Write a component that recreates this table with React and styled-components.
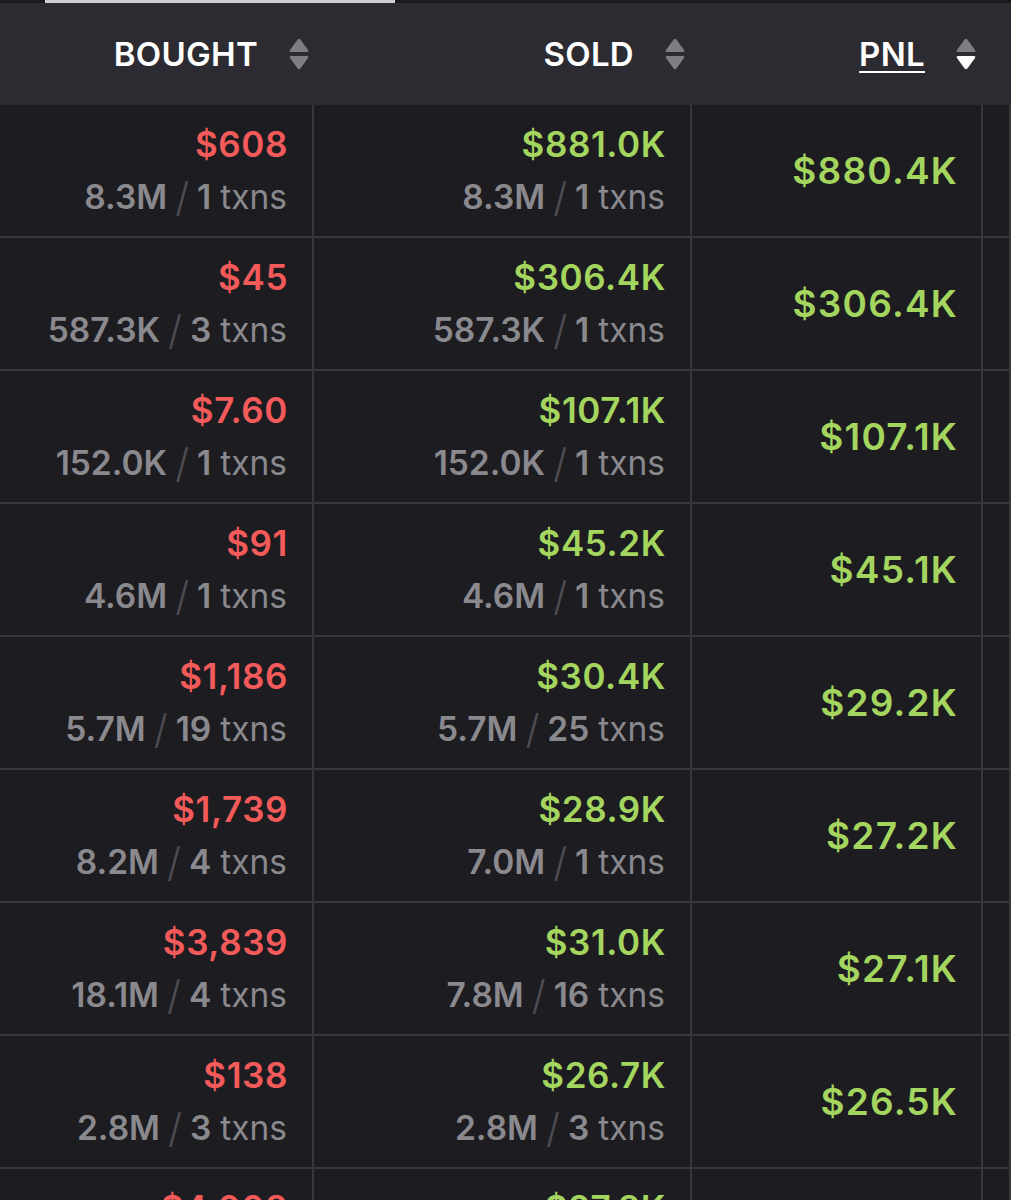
import React from "react";
import styled, { createGlobalStyle } from "styled-components";

const Global = createGlobalStyle`
  html, body { margin: 0; padding: 0; background: #1d1c21; }
  body { font-family: Inter, "Open Sans", "Liberation Sans", sans-serif; -webkit-font-smoothing: antialiased; }
  * { box-sizing: border-box; }
`;

const COLS = "314px 378px 291px 1fr";

const Page = styled.div`
  width: 1011px;
  height: 1200px;
  overflow: hidden;
  background: #1d1c21;
`;

const TabStrip = styled.div`
  height: 3px;
  background: #1a191e;
  display: flex;
`;

const TabIndicator = styled.div`
  margin-left: 45px;
  width: 350px;
  height: 3px;
  background: #cfcfd2;
`;

const HeaderRow = styled.div`
  display: grid;
  grid-template-columns: ${COLS};
  height: 102px;
  background: #2c2b31;
`;

const HeaderCell = styled.div`
  display: flex;
  align-items: center;
  justify-content: flex-end;
  gap: 31px;
  padding-right: ${(p) => p.$pr || 6}px;
`;

const HeaderLabel = styled.span`
  color: #ffffff;
  font-size: 33px;
  font-weight: 600;
  letter-spacing: 0.3px;
  text-decoration: ${(p) => (p.$active ? "underline" : "none")};
  text-decoration-thickness: 2px;
  text-underline-offset: 5px;
`;

const Row = styled.div`
  display: grid;
  grid-template-columns: ${COLS};
  height: 133px;
`;

const Cell = styled.div`
  display: flex;
  flex-direction: column;
  align-items: flex-end;
  justify-content: center;
  padding-right: ${(p) => p.$pr || 24}px;
  border-right: 2px solid #38373d;
  border-bottom: 2px solid #38373d;
  background: #1d1c21;
`;

const Value = styled.div`
  font-size: ${(p) => (p.$big ? 37 : 35)}px;
  font-weight: 600;
  line-height: 53px;
  color: ${(p) => (p.$tone === "red" ? "#f35a5a" : "#a3d55f")};
  letter-spacing: ${(p) => (p.$big ? 1.2 : 0.6)}px;
`;

const Sub = styled.div`
  display: flex;
  align-items: center;
  font-size: 33.5px;
  line-height: 53px;
  color: #8a898e;
`;

const Qty = styled.span`
  font-weight: 600;
`;

const Slash = styled.span`
  color: #4e4d53;
  font-weight: 300;
  font-size: 40px;
  margin: 0 8px;
`;

const Count = styled.span`
  font-weight: 600;
  margin-right: 9px;
`;

const Txns = styled.span`
  font-weight: 400;
  margin-right: 1px;
`;

const SortIcon = ({ active }) => (
  <svg width="20" height="32" viewBox="0 0 20 32">
    <path
      d="M8.6 1.4 Q10 0 11.4 1.4 L19 12 Q20 14 18 14 L2 14 Q0 14 1 12 Z"
      fill="#7e7d83"
    />
    <path
      d="M8.6 30.6 Q10 32 11.4 30.6 L19 20 Q20 18 18 18 L2 18 Q0 18 1 20 Z"
      fill={active ? "#ffffff" : "#7e7d83"}
    />
  </svg>
);

const rows = [
  ["$608", "8.3M", "1", "$881.0K", "8.3M", "1", "$880.4K"],
  ["$45", "587.3K", "3", "$306.4K", "587.3K", "1", "$306.4K"],
  ["$7.60", "152.0K", "1", "$107.1K", "152.0K", "1", "$107.1K"],
  ["$91", "4.6M", "1", "$45.2K", "4.6M", "1", "$45.1K"],
  ["$1,186", "5.7M", "19", "$30.4K", "5.7M", "25", "$29.2K"],
  ["$1,739", "8.2M", "4", "$28.9K", "7.0M", "1", "$27.2K"],
  ["$3,839", "18.1M", "4", "$31.0K", "7.8M", "16", "$27.1K"],
  ["$138", "2.8M", "3", "$26.7K", "2.8M", "3", "$26.5K"],
  ["$4,008", "21.4M", "5", "$27.8K", "6.1M", "2", "$23.8K"],
];

const SubLine = ({ qty, count }) => (
  <Sub>
    <Qty>{qty}</Qty>
    <Slash>/</Slash>
    <Count>{count}</Count>
    <Txns>txns</Txns>
  </Sub>
);

export default function App() {
  return (
    <Page>
      <Global />
      <TabStrip>
        <TabIndicator />
      </TabStrip>
      <HeaderRow>
        <HeaderCell $pr={5}>
          <HeaderLabel>BOUGHT</HeaderLabel>
          <SortIcon />
        </HeaderCell>
        <HeaderCell $pr={7}>
          <HeaderLabel>SOLD</HeaderLabel>
          <SortIcon />
        </HeaderCell>
        <HeaderCell $pr={7}>
          <HeaderLabel $active>PNL</HeaderLabel>
          <SortIcon active />
        </HeaderCell>
        <HeaderCell />
      </HeaderRow>
      {rows.map((r, i) => (
        <Row key={i}>
          <Cell>
            <Value $tone="red">{r[0]}</Value>
            <SubLine qty={r[1]} count={r[2]} />
          </Cell>
          <Cell>
            <Value $tone="green">{r[3]}</Value>
            <SubLine qty={r[4]} count={r[5]} />
          </Cell>
          <Cell $pr={23}>
            <Value $tone="green" $big>{r[6]}</Value>
          </Cell>
          <Cell />
        </Row>
      ))}
    </Page>
  );
}
